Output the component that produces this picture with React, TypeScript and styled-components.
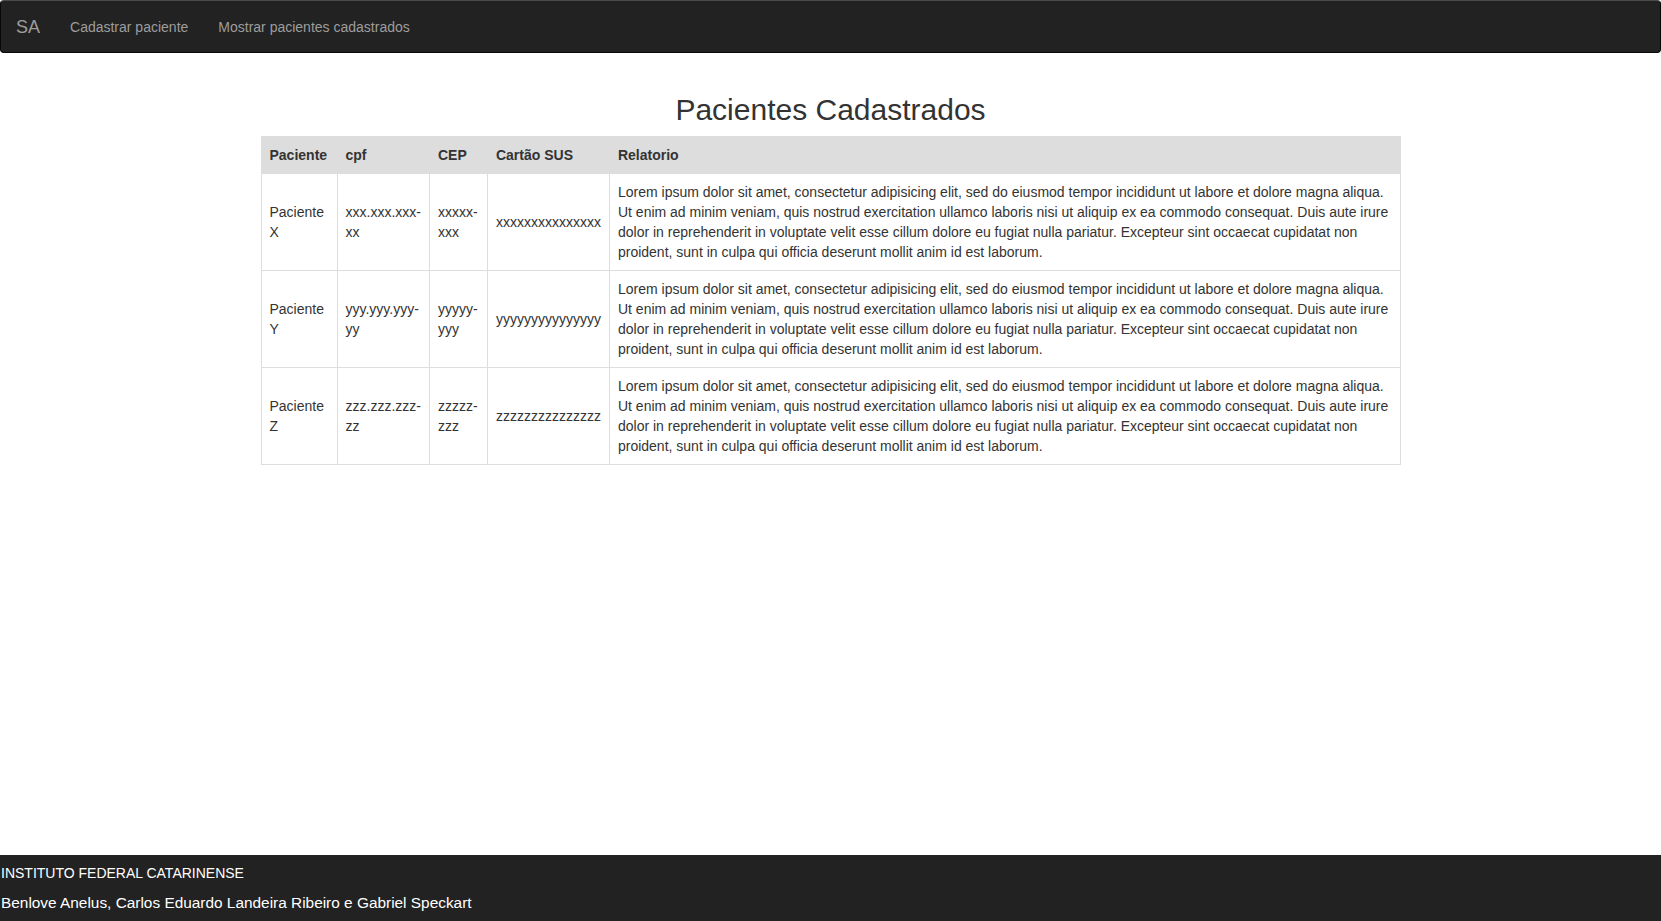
import React from "react";
import styled, { createGlobalStyle } from "styled-components";

const GlobalStyle = createGlobalStyle`
  * { box-sizing: border-box; }
  html, body { margin: 0; padding: 0; }
  body {
    font-family: "Liberation Sans", Arial, Helvetica, sans-serif;
    font-size: 14px;
    line-height: 20px;
    color: #333;
    background: #fff;
  }
`;

const Page = styled.div`
  display: flex;
  flex-direction: column;
  min-height: 100vh;
`;

const Navbar = styled.nav`
  display: flex;
  align-items: stretch;
  min-height: 51px;
  margin-bottom: 20px;
  background: #222;
  border: 1px solid #080808;
  border-top-color: #4a4a4a;
  border-radius: 4px;
  padding: 0 15px;
`;

const Brand = styled.a`
  display: block;
  margin-left: -15px;
  padding: 16px 15px 15px;
  height: 51px;
  font-size: 18px;
  line-height: 20px;
  color: #9d9d9d;
  text-decoration: none;
`;

const NavList = styled.ul`
  display: flex;
  list-style: none;
  margin: 0;
  padding: 0;
`;

const NavLink = styled.a`
  display: block;
  padding: 16px 15px 15px;
  line-height: 20px;
  color: #9d9d9d;
  text-decoration: none;
`;

const Main = styled.main`
  flex: 1;
`;

const Container = styled.div`
  width: 1170px;
  margin: 0 auto;
  padding: 0 15px;
`;

const Title = styled.h2`
  margin: 20px 0 10px;
  font-size: 30px;
  line-height: 33px;
  font-weight: 500;
  text-align: center;
  color: #333;
`;

const Table = styled.table`
  width: 100%;
  margin-bottom: 20px;
  border-collapse: collapse;
  border-spacing: 0;
  border: 1px solid #ddd;
`;

const Col = styled.col<{ $w?: number }>`
  width: ${(p) => (p.$w ? `${p.$w}px` : "auto")};
`;

const Th = styled.th`
  padding: 8px;
  text-align: left;
  font-weight: bold;
  vertical-align: bottom;
  background: #ddd;
  border: 1px solid #ddd;
  line-height: 20px;
`;

const Td = styled.td`
  padding: 8px;
  vertical-align: middle;
  border: 1px solid #ddd;
  line-height: 20px;
`;

const Footer = styled.footer`
  display: flex;
  flex-direction: column;
  gap: 10px;
  padding: 8px 1px;
  background: #222;
  color: #fff;
`;

const FooterLine = styled.p<{ $large?: boolean }>`
  margin: 0;
  line-height: 20px;
  font-size: ${(p) => (p.$large ? "15.4px" : "14px")};
`;

const LOREM =
  "Lorem ipsum dolor sit amet, consectetur adipisicing elit, sed do eiusmod tempor incididunt ut labore et dolore magna aliqua. Ut enim ad minim veniam, quis nostrud exercitation ullamco laboris nisi ut aliquip ex ea commodo consequat. Duis aute irure dolor in reprehenderit in voluptate velit esse cillum dolore eu fugiat nulla pariatur. Excepteur sint occaecat cupidatat non proident, sunt in culpa qui officia deserunt mollit anim id est laborum.";

const patients = ["x", "y", "z"].map((c) => ({
  name: `Paciente ${c.toUpperCase()}`,
  cpf: `${c.repeat(3)}.${c.repeat(3)}.${c.repeat(3)}-${c.repeat(2)}`,
  cep: `${c.repeat(5)}-${c.repeat(3)}`,
  sus: c.repeat(15),
  report: LOREM,
}));

export default function App() {
  return (
    <>
      <GlobalStyle />
      <Page>
        <Navbar>
          <Brand href="#">SA</Brand>
          <NavList>
            <li>
              <NavLink href="#">Cadastrar paciente</NavLink>
            </li>
            <li>
              <NavLink href="#">Mostrar pacientes cadastrados</NavLink>
            </li>
          </NavList>
        </Navbar>
        <Main>
          <Container>
            <Title>Pacientes Cadastrados</Title>
            <Table>
              <colgroup>
                <Col $w={76} />
                <Col $w={92} />
                <Col $w={58} />
                <Col $w={121} />
                <Col />
              </colgroup>
              <thead>
                <tr>
                  <Th>Paciente</Th>
                  <Th>cpf</Th>
                  <Th>CEP</Th>
                  <Th>Cartão SUS</Th>
                  <Th>Relatorio</Th>
                </tr>
              </thead>
              <tbody>
                {patients.map((p) => (
                  <tr key={p.name}>
                    <Td>{p.name}</Td>
                    <Td>{p.cpf}</Td>
                    <Td>{p.cep}</Td>
                    <Td>{p.sus}</Td>
                    <Td>{p.report}</Td>
                  </tr>
                ))}
              </tbody>
            </Table>
          </Container>
        </Main>
        <Footer>
          <FooterLine>INSTITUTO FEDERAL CATARINENSE</FooterLine>
          <FooterLine $large>Benlove Anelus, Carlos Eduardo Landeira Ribeiro e Gabriel Speckart</FooterLine>
        </Footer>
      </Page>
    </>
  );
}
